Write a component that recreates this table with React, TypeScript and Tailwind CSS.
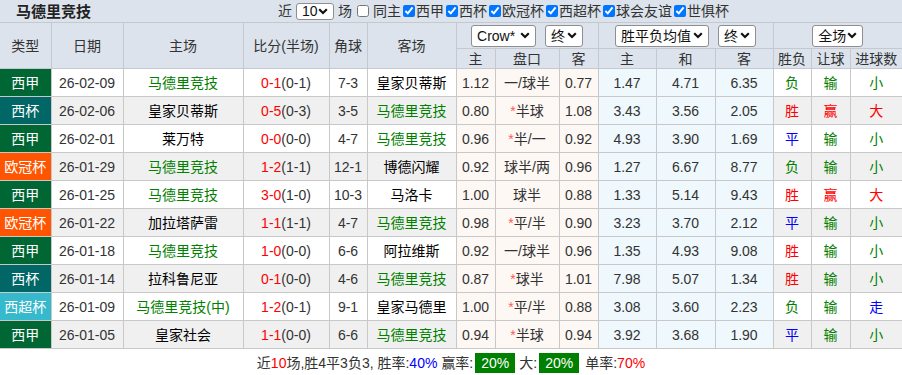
import React from "react";

interface IMatchRow {
  league: string;
  leagueBg: string;
  date: string;
  home: string;
  score: string;
  half: string;
  corner: string;
  away: string;
  o1: string;
  pan: string;
  star: boolean;
  o2: string;
  win: string;
  draw: string;
  lose: string;
  res: string;
  rq: string;
  goals: string;
}

const TEAM = "马德里竞技";

const rows: IMatchRow[] = [
  { league: "西甲", leagueBg: "bg-[#006633]", date: "26-02-09", home: "马德里竞技", score: "0-1", half: "(0-1)", corner: "7-3", away: "皇家贝蒂斯", o1: "1.12", pan: "一/球半", star: false, o2: "0.77", win: "1.47", draw: "4.71", lose: "6.35", res: "负", rq: "输", goals: "小" },
  { league: "西杯", leagueBg: "bg-[#006666]", date: "26-02-06", home: "皇家贝蒂斯", score: "0-5", half: "(0-3)", corner: "3-5", away: "马德里竞技", o1: "0.80", pan: "半球", star: true, o2: "1.08", win: "3.43", draw: "3.56", lose: "2.05", res: "胜", rq: "赢", goals: "大" },
  { league: "西甲", leagueBg: "bg-[#006633]", date: "26-02-01", home: "莱万特", score: "0-0", half: "(0-0)", corner: "4-7", away: "马德里竞技", o1: "0.96", pan: "半/一", star: true, o2: "0.92", win: "4.93", draw: "3.90", lose: "1.69", res: "平", rq: "输", goals: "小" },
  { league: "欧冠杯", leagueBg: "bg-[#ff5500]", date: "26-01-29", home: "马德里竞技", score: "1-2", half: "(1-1)", corner: "12-1", away: "博德闪耀", o1: "0.92", pan: "球半/两", star: false, o2: "0.96", win: "1.27", draw: "6.67", lose: "8.77", res: "负", rq: "输", goals: "小" },
  { league: "西甲", leagueBg: "bg-[#006633]", date: "26-01-25", home: "马德里竞技", score: "3-0", half: "(1-0)", corner: "10-3", away: "马洛卡", o1: "1.00", pan: "球半", star: false, o2: "0.88", win: "1.33", draw: "5.14", lose: "9.43", res: "胜", rq: "赢", goals: "大" },
  { league: "欧冠杯", leagueBg: "bg-[#ff5500]", date: "26-01-22", home: "加拉塔萨雷", score: "1-1", half: "(1-1)", corner: "4-7", away: "马德里竞技", o1: "0.98", pan: "平/半", star: true, o2: "0.90", win: "3.23", draw: "3.70", lose: "2.12", res: "平", rq: "输", goals: "小" },
  { league: "西甲", leagueBg: "bg-[#006633]", date: "26-01-18", home: "马德里竞技", score: "1-0", half: "(0-0)", corner: "6-6", away: "阿拉维斯", o1: "0.92", pan: "一/球半", star: false, o2: "0.96", win: "1.35", draw: "4.93", lose: "9.08", res: "胜", rq: "输", goals: "小" },
  { league: "西杯", leagueBg: "bg-[#006666]", date: "26-01-14", home: "拉科鲁尼亚", score: "0-1", half: "(0-0)", corner: "4-6", away: "马德里竞技", o1: "0.87", pan: "球半", star: true, o2: "1.01", win: "7.98", draw: "5.07", lose: "1.34", res: "胜", rq: "输", goals: "小" },
  { league: "西超杯", leagueBg: "bg-[#36b9cc]", date: "26-01-09", home: "马德里竞技(中)", score: "1-2", half: "(0-1)", corner: "9-1", away: "皇家马德里", o1: "1.00", pan: "平/半", star: true, o2: "0.88", win: "3.08", draw: "3.60", lose: "2.23", res: "负", rq: "输", goals: "走" },
  { league: "西甲", leagueBg: "bg-[#006633]", date: "26-01-05", home: "皇家社会", score: "1-1", half: "(0-0)", corner: "6-6", away: "马德里竞技", o1: "0.94", pan: "半球", star: true, o2: "0.94", win: "3.92", draw: "3.68", lose: "1.90", res: "平", rq: "输", goals: "小" },
];

const colWidths = [51, 72, 120, 86, 38, 89, 39, 64, 39, 58, 59, 58, 38, 39, 52];

const leagueFilters = ["西甲", "西杯", "欧冠杯", "西超杯", "球会友谊", "世俱杯"];

function resultColor(v: string) {
  if (v === "胜" || v === "赢" || v === "大") return "text-[#ff0000]";
  if (v === "平" || v === "走") return "text-[#0000ff]";
  return "text-[#008000]";
}

function Chevron() {
  return (
    <svg width="10" height="7" viewBox="0 0 10 7" className="shrink-0">
      <path d="M1.2 1.3 L5 5 L8.8 1.3" fill="none" stroke="#111" strokeWidth="2.2" />
    </svg>
  );
}

function FakeSelect({ label, width, height = "h-[22px]" }: { label: string; width: string; height?: string }) {
  return (
    <div
      className={`inline-flex items-center justify-between ${width} ${height} bg-white border border-[#8f8f8f] rounded-[3px] pl-[5px] pr-[5px] text-[14px] text-[#111] leading-none`}
    >
      <span>{label}</span>
      <Chevron />
    </div>
  );
}

const th = "border border-[#c4c9cf] p-0 text-center font-normal text-[#333] bg-[#dce3ec]";
const td = "border border-[#c8c8c8] p-0 text-center";

function App() {
  return (
    <div className="w-[902px] h-[375px] bg-white overflow-hidden font-['Liberation_Sans','Noto_Sans_CJK_SC',sans-serif] text-[14px] text-[#333]">
      {/* title bar */}
      <div className="flex items-center h-[22px] bg-[#dce3ec]">
        <div className="w-[278px] pl-[16px] text-[15px] font-bold text-[#222] leading-none">{TEAM}</div>
        <div className="flex items-center leading-none">
          <span>近</span>
          <div className="mx-[4px]">
            <FakeSelect label="10" width="w-[38px]" height="h-[17px]" />
          </div>
          <span>场</span>
          <input type="checkbox" className="w-[12px] h-[12px] ml-[5px] mr-[4px]" readOnly />
          <span>同主</span>
          {leagueFilters.map((f) => (
            <label key={f} className="flex items-center">
              <input type="checkbox" defaultChecked className="w-[12px] h-[12px] ml-[2px] mr-[1px]" />
              <span>{f}</span>
            </label>
          ))}
        </div>
      </div>

      {/* table */}
      <table className="w-[902px] table-fixed border-collapse leading-none">
        <colgroup>
          {colWidths.map((w, i) => (
            <col key={i} style={{ width: w }} />
          ))}
        </colgroup>
        <thead>
          <tr className="h-[26px]">
            <th rowSpan={2} className={`${th} border-l-0`}>类型</th>
            <th rowSpan={2} className={th}>日期</th>
            <th rowSpan={2} className={th}>主场</th>
            <th rowSpan={2} className={th}>比分(半场)</th>
            <th rowSpan={2} className={th}>角球</th>
            <th rowSpan={2} className={th}>客场</th>
            <th colSpan={3} className={th}>
              <div className="flex justify-center gap-[9px]">
                <FakeSelect label="Crow*" width="w-[65px]" />
                <FakeSelect label="终" width="w-[38px]" />
              </div>
            </th>
            <th colSpan={3} className={th}>
              <div className="flex justify-center gap-[9px]">
                <FakeSelect label="胜平负均值" width="w-[94px]" />
                <FakeSelect label="终" width="w-[38px]" />
              </div>
            </th>
            <th colSpan={3} className={`${th} border-r-0`}>
              <div className="flex justify-center">
                <FakeSelect label="全场" width="w-[51px]" />
              </div>
            </th>
          </tr>
          <tr className="h-[20px]">
            <th className={th}>主</th>
            <th className={th}>盘口</th>
            <th className={th}>客</th>
            <th className={th}>主</th>
            <th className={th}>和</th>
            <th className={th}>客</th>
            <th className={th}>胜负</th>
            <th className={th}>让球</th>
            <th className={`${th} border-r-0`}>进球数</th>
          </tr>
        </thead>
        <tbody>
          {rows.map((r, i) => {
            const rowBg = i % 2 === 1 ? "bg-[#f0f0f0]" : "bg-white";
            return (
              <tr key={r.date} className="h-[28px]">
                <td className={`${td} border-l-0 ${r.leagueBg} text-white`}>{r.league}</td>
                <td className={`${td} ${rowBg} text-[#333]`}>{r.date}</td>
                <td className={`${td} ${rowBg} ${r.home.startsWith(TEAM) ? "text-[#008000]" : "text-black"}`}>{r.home}</td>
                <td className={`${td} ${rowBg}`}>
                  <span className="text-[#ff0000]">{r.score}</span>
                  <span className="text-[#333]">{r.half}</span>
                </td>
                <td className={`${td} ${rowBg} text-[#333]`}>{r.corner}</td>
                <td className={`${td} ${rowBg} ${r.away.startsWith(TEAM) ? "text-[#008000]" : "text-black"}`}>{r.away}</td>
                <td className={`${td} bg-[#fdf8f4]`}>{r.o1}</td>
                <td className={`${td} bg-[#fdf8f4]`}>
                  {r.star && <span className="text-[#ff5a5a]">*</span>}
                  {r.pan}
                </td>
                <td className={`${td} bg-[#fdf8f4]`}>{r.o2}</td>
                <td className={`${td} bg-[#eff8fc]`}>{r.win}</td>
                <td className={`${td} bg-[#eff8fc]`}>{r.draw}</td>
                <td className={`${td} bg-[#eff8fc]`}>{r.lose}</td>
                <td className={`${td} ${rowBg} ${resultColor(r.res)}`}>{r.res}</td>
                <td className={`${td} ${rowBg} ${resultColor(r.rq)}`}>{r.rq}</td>
                <td className={`${td} border-r-0 ${rowBg} ${resultColor(r.goals)}`}>{r.goals}</td>
              </tr>
            );
          })}
        </tbody>
      </table>

      {/* summary */}
      <div className="flex items-center justify-center h-[27px] leading-none text-[#333]">
        <span>近</span>
        <span className="text-[#ff0000]">10</span>
        <span>场,胜4平3负3, 胜率:</span>
        <span className="text-[#0000ff]">40%</span>
        <span className="ml-[4px]">赢率:</span>
        <span className="ml-[2px] px-[6px] h-[20px] flex items-center bg-[#008000] text-white">20%</span>
        <span className="ml-[4px]">大:</span>
        <span className="ml-[2px] px-[6px] h-[20px] flex items-center bg-[#008000] text-white">20%</span>
        <span className="ml-[6px]">单率:</span>
        <span className="text-[#ff0000]">70%</span>
      </div>
    </div>
  );
}

export default App;
